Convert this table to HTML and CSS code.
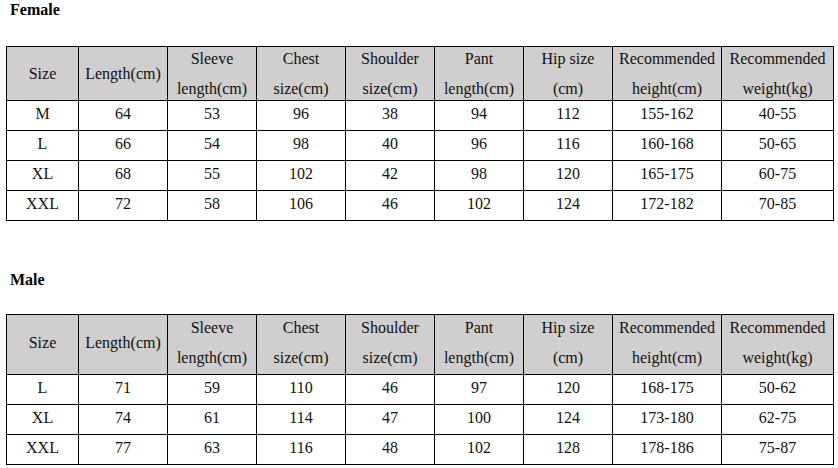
FILE: index.html
```html
<!DOCTYPE html>
<html lang="en">
<head>
<meta charset="utf-8">
<title>Size chart</title>
<link rel="stylesheet" href="styles.css">
</head>
<body>
<div class="page">
  <section class="chart chart-female">
    <h2 class="chart-title">Female</h2>
    <table class="size-table">
      <colgroup>
        <col class="c-size"><col class="c-mid"><col class="c-mid"><col class="c-mid"><col class="c-mid"><col class="c-mid"><col class="c-mid"><col class="c-rh"><col class="c-rw">
      </colgroup>
      <thead>
        <tr>
          <th><div class="hd">Size</div></th>
          <th><div class="hd">Length(cm)</div></th>
          <th><div class="hd">Sleeve<br>length(cm)</div></th>
          <th><div class="hd">Chest<br>size(cm)</div></th>
          <th><div class="hd">Shoulder<br>size(cm)</div></th>
          <th><div class="hd">Pant<br>length(cm)</div></th>
          <th><div class="hd">Hip size<br>(cm)</div></th>
          <th><div class="hd">Recommended<br>height(cm)</div></th>
          <th><div class="hd">Recommended<br>weight(kg)</div></th>
        </tr>
      </thead>
      <tbody>
        <tr><td>M</td><td>64</td><td>53</td><td>96</td><td>38</td><td>94</td><td>112</td><td>155-162</td><td>40-55</td></tr>
        <tr><td>L</td><td>66</td><td>54</td><td>98</td><td>40</td><td>96</td><td>116</td><td>160-168</td><td>50-65</td></tr>
        <tr><td>XL</td><td>68</td><td>55</td><td>102</td><td>42</td><td>98</td><td>120</td><td>165-175</td><td>60-75</td></tr>
        <tr><td>XXL</td><td>72</td><td>58</td><td>106</td><td>46</td><td>102</td><td>124</td><td>172-182</td><td>70-85</td></tr>
      </tbody>
    </table>
  </section>
  <section class="chart chart-male">
    <h2 class="chart-title">Male</h2>
    <table class="size-table">
      <colgroup>
        <col class="c-size"><col class="c-mid"><col class="c-mid"><col class="c-mid"><col class="c-mid"><col class="c-mid"><col class="c-mid"><col class="c-rh"><col class="c-rw">
      </colgroup>
      <thead>
        <tr>
          <th><div class="hd">Size</div></th>
          <th><div class="hd">Length(cm)</div></th>
          <th><div class="hd">Sleeve<br>length(cm)</div></th>
          <th><div class="hd">Chest<br>size(cm)</div></th>
          <th><div class="hd">Shoulder<br>size(cm)</div></th>
          <th><div class="hd">Pant<br>length(cm)</div></th>
          <th><div class="hd">Hip size<br>(cm)</div></th>
          <th><div class="hd">Recommended<br>height(cm)</div></th>
          <th><div class="hd">Recommended<br>weight(kg)</div></th>
        </tr>
      </thead>
      <tbody>
        <tr><td>L</td><td>71</td><td>59</td><td>110</td><td>46</td><td>97</td><td>120</td><td>168-175</td><td>50-62</td></tr>
        <tr><td>XL</td><td>74</td><td>61</td><td>114</td><td>47</td><td>100</td><td>124</td><td>173-180</td><td>62-75</td></tr>
        <tr><td>XXL</td><td>77</td><td>63</td><td>116</td><td>48</td><td>102</td><td>128</td><td>178-186</td><td>75-87</td></tr>
      </tbody>
    </table>
  </section>
</div>
</body>
</html>
```

FILE: styles.css
```css
html, body {
  margin: 0;
  padding: 0;
  background: #ffffff;
}

body {
  font-family: "Liberation Serif", "Times New Roman", serif;
  color: #111111;
}

.page {
  display: flex;
  flex-direction: column;
  padding: 0 0 0 6px;
}

.chart {
  display: flex;
  flex-direction: column;
}

.chart-title {
  margin: 0 0 26px 4px;
  font-size: 16px;
  line-height: 20px;
  font-weight: bold;
  color: #000000;
}

.chart-male {
  margin-top: 49px;
}

.chart-male .chart-title {
  margin-bottom: 24px;
}

.size-table {
  border-collapse: collapse;
  table-layout: fixed;
  width: 828px;
  font-size: 16px;
}

.c-size { width: 72px; }
.c-mid { width: 89px; }
.c-rh { width: 109px; }
.c-rw { width: 112px; }

.size-table th,
.size-table td {
  border: 1px solid #000000;
  padding: 0;
  text-align: center;
  vertical-align: middle;
  white-space: nowrap;
}

.size-table th {
  background: #d0cece;
  font-weight: normal;
}

.size-table td {
  height: 25px;
  line-height: 25px;
  padding-bottom: 4px;
}

.hd {
  line-height: 30px;
  margin: -3px 0 -4px;
}

.chart-male .hd {
  margin: -2px 0 1px;
}
```
